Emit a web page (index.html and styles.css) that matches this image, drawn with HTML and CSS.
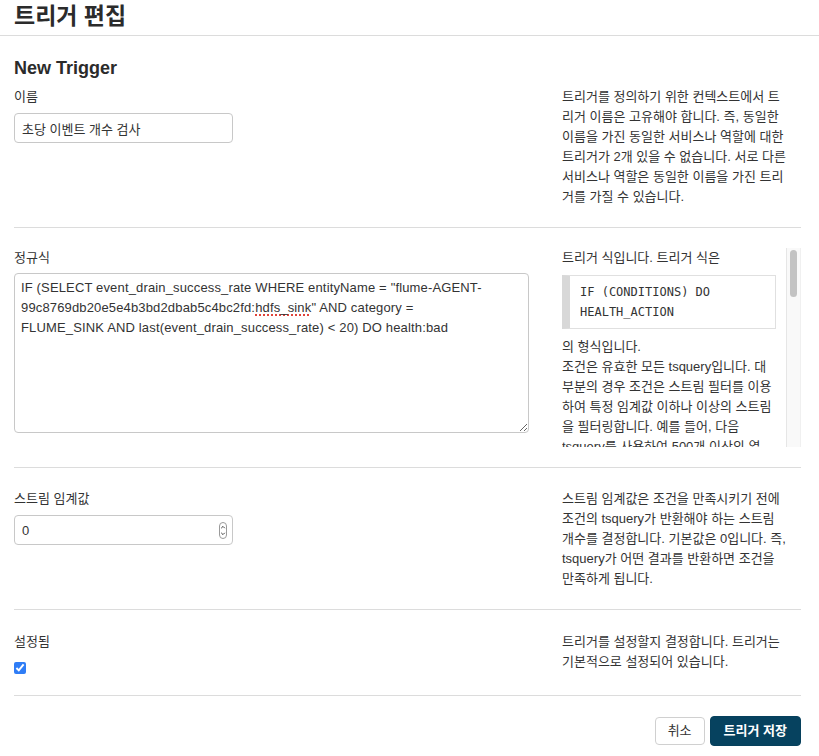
FILE: index.html
```html
<!DOCTYPE html>
<html lang="ko">
<head>
<meta charset="utf-8">
<title>트리거 편집</title>
<link rel="stylesheet" href="styles.css">
</head>
<body>
<header class="page-header">
  <h1 class="page-title">트리거 편집</h1>
</header>
<main class="content">
  <h2 class="form-title">New Trigger</h2>

  <section class="row row-first">
    <div class="field">
      <label class="field-label" for="trigger-name">이름</label>
      <input id="trigger-name" class="text-input" type="text" value="초당 이벤트 개수 검사">
    </div>
    <p class="help">트리거를 정의하기 위한 컨텍스트에서 트<br>리거 이름은 고유해야 합니다. 즉, 동일한<br>이름을 가진 동일한 서비스나 역할에 대한<br>트리거가 2개 있을 수 없습니다. 서로 다른<br>서비스나 역할은 동일한 이름을 가진 트리<br>거를 가질 수 있습니다.</p>
  </section>

  <section class="row row-expr">
    <div class="field">
      <label class="field-label">정규식</label>
      <div class="textarea" role="textbox" aria-multiline="true">IF (SELECT event_drain_success_rate WHERE entityName = "flume-AGENT-<wbr>99c8769db20e5e4b3bd2dbab5c4bc2fd:<span class="misspelled">hdfs_sink</span>" AND category = FLUME_SINK AND last(event_drain_success_rate) &lt; 20) DO health:bad</div>
    </div>
    <div class="help-scroll">
      <div class="help-scroll-content">
        <div class="help-line">트리거 식입니다. 트리거 식은</div>
        <pre class="code">IF (CONDITIONS) DO
HEALTH_ACTION</pre>
        <p class="help-block help-lines">의 형식입니다.<br>조건은 유효한 모든 tsquery입니다. 대<br>부분의 경우 조건은 스트림 필터를 이용<br>하여 특정 임계값 이하나 이상의 스트림<br>을 필터링합니다. 예를 들어, 다음<br>tsquery를 사용하여 500개 이상의 열<br>린 파일 설명자가 있는 역할을 선택할<br>수 있습니다.</p>
        <pre class="code code-wrap">SELECT fd_open WHERE roleType = DATANODE AND last(fd_open) &gt; 500</pre>
        <p class="help-block">스트림 필터를 사용하면 많은 스트림을 반환하는 tsquery도 트리거에서 처리할 수 있습니다. 스트림이 조건을 충족하는지 확인하려면 last, any, count 등의 함수를 사용하십시오.</p>
        <p class="help-block">상태 작업은 조건이 충족될 때 수행할 작업입니다. 지원되는 작업은 다음과 같습니다.</p>
        <pre class="code">health:bad
health:concerning
health:good</pre>
        <p class="help-block">트리거가 발동하면 엔터티의 상태가 지정된 값으로 변경되고 이벤트가 생성됩니다. 이 이벤트를 사용하여 경고를 구성할 수 있습니다.</p>
      </div>
      <div class="scrollbar" aria-hidden="true">
        <div class="scrollbar-thumb"></div>
      </div>
    </div>
  </section>

  <section class="row row-threshold">
    <div class="field">
      <label class="field-label" for="threshold">스트림 임계값</label>
      <div class="number-wrap">
        <input id="threshold" class="text-input number-input" type="number" value="0">
        <svg class="spinner" width="8" height="17" viewBox="0 0 8 17" aria-hidden="true">
          <rect x="0.5" y="0.5" width="7" height="16" rx="3.5" fill="#fff" stroke="#9a9a9a"/>
          <path d="M2.2 6.2 L4 4.4 L5.8 6.2" fill="none" stroke="#444" stroke-width="1"/>
          <path d="M2.2 10.8 L4 12.6 L5.8 10.8" fill="none" stroke="#444" stroke-width="1"/>
        </svg>
      </div>
    </div>
    <p class="help">스트림 임계값은 조건을 만족시키기 전에<br>조건의 tsquery가 반환해야 하는 스트림<br>개수를 결정합니다. 기본값은 0입니다. 즉,<br>tsquery가 어떤 결과를 반환하면 조건을<br>만족하게 됩니다.</p>
  </section>

  <section class="row row-check">
    <div class="field">
      <label class="field-label field-label-check" for="enabled">설정됨</label>
      <input id="enabled" class="checkbox" type="checkbox" checked>
    </div>
    <p class="help">트리거를 설정할지 결정합니다. 트리거는<br>기본적으로 설정되어 있습니다.</p>
  </section>

  <div class="actions">
    <button class="btn" type="button">취소</button>
    <button class="btn btn-primary" type="button">트리거 저장</button>
  </div>
</main>
</body>
</html>
```

FILE: styles.css
```css
* {
  box-sizing: border-box;
}

body {
  margin: 0;
  background: #fff;
  color: #333;
  font-family: "Liberation Sans", "Noto Sans CJK KR", sans-serif;
  font-size: 13px;
  line-height: 20px;
}

.page-header {
  padding: 0 14px 2px;
  border-bottom: 1px solid #dcdcdc;
}

.page-title {
  margin: 0;
  font-size: 23px;
  line-height: 33px;
  font-weight: 700;
  color: #2b2b2b;
}

.content {
  padding: 0 18px 0 14px;
}

.form-title {
  margin: 21px 0 8px;
  font-size: 18px;
  line-height: 22px;
  font-weight: 700;
  color: #2b2b2b;
}

.row {
  display: grid;
  grid-template-columns: 519px 239px;
  column-gap: 29px;
  align-items: start;
  padding: 20px 0;
  border-bottom: 1px solid #dcdcdc;
}

.row-first {
  padding-top: 0;
}

.row-threshold {
  padding-top: 21px;
}

.row-check {
  padding-top: 22px;
  padding-bottom: 21px;
}

.field-label {
  display: block;
  margin-bottom: 6px;
}

.field-label-check {
  margin-bottom: 10px;
}

.text-input {
  display: block;
  width: 219px;
  height: 30px;
  margin: 0;
  padding: 0 7px;
  border: 1px solid #c8c8c8;
  border-radius: 4px;
  background: #fff;
  color: #333;
  font-family: inherit;
  font-size: 13px;
}

.number-wrap {
  position: relative;
  width: 219px;
}

.number-input::-webkit-inner-spin-button,
.number-input::-webkit-outer-spin-button {
  -webkit-appearance: none;
  margin: 0;
}

.spinner {
  position: absolute;
  right: 6px;
  top: 7px;
}

.textarea {
  width: 515px;
  height: 160px;
  margin-top: -1px;
  padding: 4px 28px 4px 6px;
  border: 1px solid #c8c8c8;
  border-radius: 4px;
  font-size: 13px;
  letter-spacing: 0.15px;
  line-height: 20px;
  color: #333;
  overflow: auto;
  resize: vertical;
}

.misspelled {
  text-decoration: underline dotted #e0443a;
  text-decoration-thickness: 2px;
  text-underline-offset: 2px;
}

.help {
  margin: 0;
  white-space: nowrap;
}

.help-scroll {
  display: flex;
  height: 199px;
  overflow: hidden;
}

.help-scroll-content {
  width: 224px;
  padding-right: 10px;
  overflow: hidden;
}

.scrollbar {
  width: 15px;
  height: 100%;
  background: #f9f9f9;
  border-left: 1px solid #e6e6e6;
  border-right: 1px solid #f0f0f0;
  padding: 2px 3px 0 3px;
}

.scrollbar-thumb {
  height: 47px;
  border-radius: 4px;
  background: #c3c3c3;
}

.help-line,
.help-lines {
  white-space: nowrap;
}

.help-block {
  margin: 0 0 8px;
}

.code {
  margin: 7px 0 8px;
  padding: 6px 10px;
  border: 1px solid #e0e0e0;
  border-left: 8px solid #d8d8d8;
  background: #fff;
  font-family: "DejaVu Sans Mono", monospace;
  font-size: 12px;
  line-height: 20px;
  color: #333;
}

.code-wrap {
  white-space: pre-wrap;
  word-break: break-all;
}

.checkbox {
  display: block;
  width: 12px;
  height: 12px;
  margin: 0;
  accent-color: #2f7df6;
}

.actions {
  display: flex;
  justify-content: flex-end;
  align-items: center;
  gap: 5px;
  padding-top: 20px;
}

.btn {
  height: 28px;
  padding: 0 12px;
  border: 1px solid #d0d0d0;
  border-radius: 4px;
  background: #fff;
  color: #333;
  font-family: inherit;
  font-size: 13px;
  line-height: 20px;
}

.btn-primary {
  height: 30px;
  padding: 0 13px;
  border-color: #06405c;
  background: #06425f;
  color: #fff;
  font-weight: 700;
}
```
